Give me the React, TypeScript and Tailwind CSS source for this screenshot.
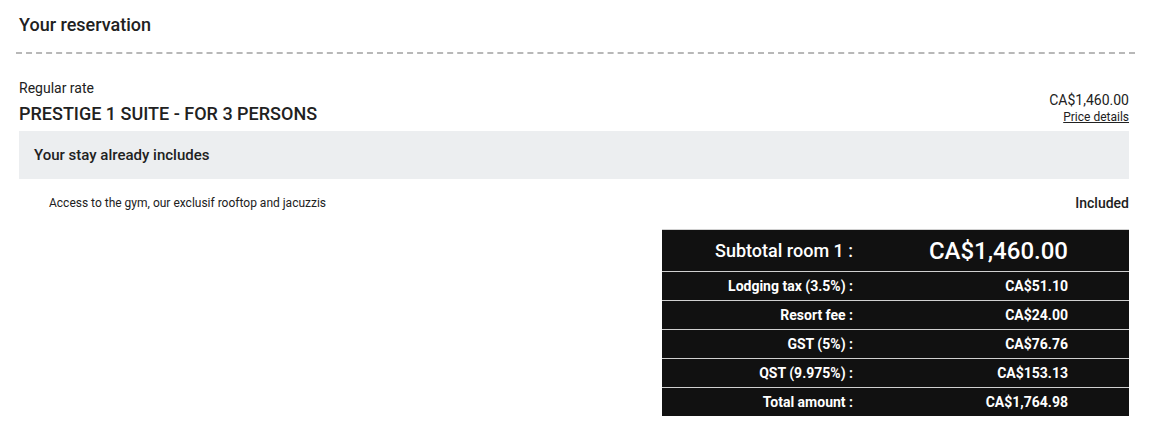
import React from "react";

const rows = [
  { label: "Lodging tax (3.5%) :", value: "CA$51.10" },
  { label: "Resort fee :", value: "CA$24.00" },
  { label: "GST (5%) :", value: "CA$76.76" },
  { label: "QST (9.975%) :", value: "CA$153.13" },
  { label: "Total amount :", value: "CA$1,764.98" },
];

export default function App() {
  return (
    <div
      className="w-[1152px] h-[429px] bg-white text-[#212121] pl-[19px] pr-[23px]"
      style={{ fontFamily: "Roboto, 'Liberation Sans', sans-serif" }}
    >
      <div className="pt-[13px] pb-[15px] text-[18px] leading-[24px] font-medium">
        Your reservation
      </div>
      <div className="border-t-2 border-dashed border-[#b8b8b8] ml-[-3px] mr-[-6px]" />
      <div className="flex justify-between items-end mt-[24px]">
        <div>
          <div className="text-[14px] leading-[20px]">Regular rate</div>
          <div className="text-[18px] leading-[24px] font-medium mt-[4px] uppercase">
            PRESTIGE 1 SUITE - FOR 3 PERSONS
          </div>
        </div>
        <div className="text-right pb-[1px]">
          <div className="text-[14px] leading-[18px]">CA$1,460.00</div>
          <div className="text-[12px] leading-[16px] underline">Price details</div>
        </div>
      </div>
      <div className="mt-[5px] h-[48px] bg-[#eceef0] flex items-center pl-[15px] text-[15px] font-medium">
        Your stay already includes
      </div>
      <div className="flex justify-between items-center mt-[14px] h-[20px]">
        <div className="pl-[30px] text-[12px]">
          Access to the gym, our exclusif rooftop and jacuzzis
        </div>
        <div className="text-[14px] font-medium">Included</div>
      </div>
      <div className="ml-auto mt-[16px] w-[467px] bg-[#111111] text-white border-t border-[#d0d0d0]">
        <div className="flex items-center h-[41px]">
          <div className="w-[191px] text-right text-[18px] font-medium">Subtotal room 1 :</div>
          <div className="flex-1 text-right pr-[61px] text-[24px] font-medium">CA$1,460.00</div>
        </div>
        {rows.map((r) => (
          <div key={r.label} className="flex items-center h-[29px] border-t border-[#d0d0d0]">
            <div className="w-[191px] text-right text-[14px] font-bold">{r.label}</div>
            <div className="flex-1 text-right pr-[61px] text-[14px] font-bold">{r.value}</div>
          </div>
        ))}
      </div>
    </div>
  );
}
